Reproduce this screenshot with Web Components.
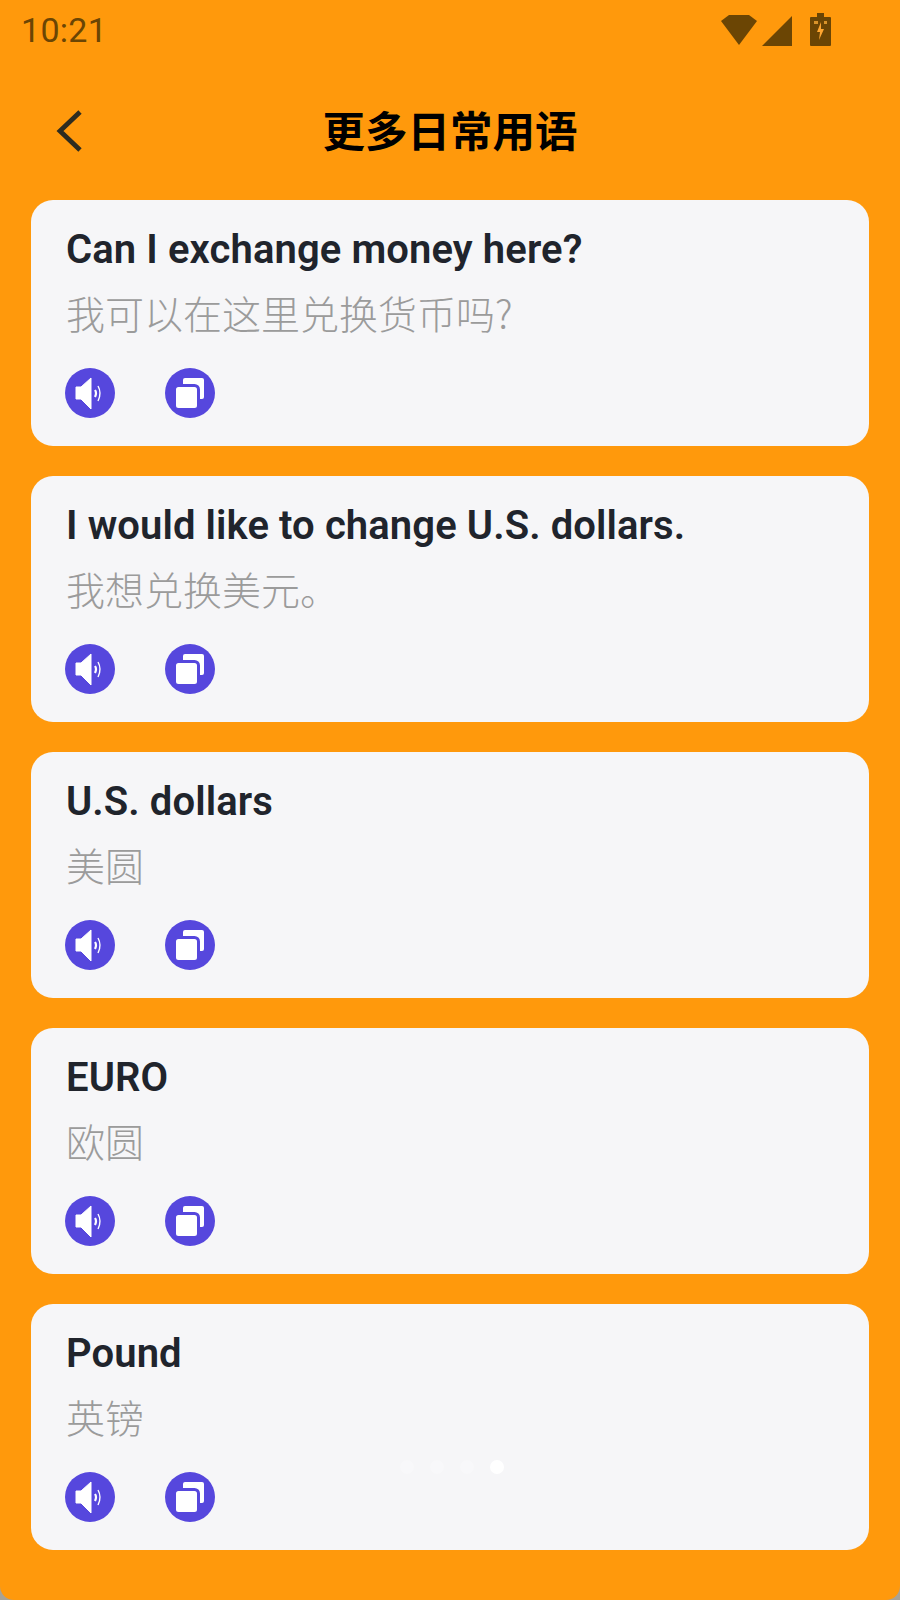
<!DOCTYPE html>
<html lang="zh">
<head>
<meta charset="utf-8">
<title>更多日常用语</title>
<style>
  html, body { margin: 0; padding: 0; background: #a9a295; }
  body { width: 900px; height: 1600px; overflow: hidden; font-family: Roboto, "Noto Sans CJK SC", sans-serif; }
</style>
</head>
<body>
<phrase-screen>
  <phrase-card en="Can I exchange money here?" zh="我可以在这里兑换货币吗?"></phrase-card>
  <phrase-card en="I would like to change U.S. dollars." zh="我想兑换美元。"></phrase-card>
  <phrase-card en="U.S. dollars" zh="美圆"></phrase-card>
  <phrase-card en="EURO" zh="欧圆"></phrase-card>
  <phrase-card en="Pound" zh="英镑"></phrase-card>
</phrase-screen>

<script>
class StatusBar extends HTMLElement {
  constructor() {
    super();
    this.attachShadow({ mode: "open" });
    this.shadowRoot.innerHTML = `
<style>
:host {
  display: flex;
  align-items: center;
  justify-content: space-between;
  height: 60px;
  padding: 0 69px 0 21px;
  color: #6b4504;
}
.time { font: 400 34px/1 Roboto, sans-serif; letter-spacing: 0.3px; }
.icons { display: flex; align-items: flex-start; height: 34px; }
svg { display: block; fill: #6b4504; }
</style>
<span class="time">10:21</span>
<span class="icons">
  <svg width="36" height="34" viewBox="0 0 36 34"><path d="M0 8 L8 2 H28 L36 8 L18 32 Z"/></svg>
  <svg width="31" height="34" viewBox="0 0 31 34" style="margin-left:5px"><path d="M0 33 L30 3 V33 Z"/></svg>
  <svg width="21" height="34" viewBox="0 0 21 34" style="margin-left:17px">
    <path d="M7 0 H14 V4 H20 Q21 4 21 5 V32 Q21 33 20 33 H1 Q0 33 0 32 V5 Q0 4 1 4 H7 Z"/>
    <path d="M11 9 L7 19 H10 L9 27 L14 16 H11 Z" fill="#ffa630"/>
    <path d="M4 8 H8 V11 H4 Z M14 8 H17 V11 H14 Z" fill="#d9932a"/>
  </svg>
</span>`;
  }
}

class TopBar extends HTMLElement {
  constructor() {
    super();
    this.attachShadow({ mode: "open" });
    this.shadowRoot.innerHTML = `
<style>
:host {
  display: block;
  position: relative;
  height: 80px;
  margin-top: 31px;
  text-align: center;
}
h1 {
  margin: 0;
  font: 700 42.5px/75px "Noto Sans CJK SC", sans-serif;
  color: #000;
}
button {
  position: absolute;
  left: 50px;
  top: 18px;
  padding: 0;
  border: 0;
  background: none;
}
svg { display: block; }
</style>
<button aria-label="back">
  <svg width="40" height="44" viewBox="0 0 40 44"><path d="M30 3 L10 22 L30 41" fill="none" stroke="#2e2c20" stroke-width="4.8"/></svg>
</button>
<h1>更多日常用语</h1>`;
  }
}

class RoundIcon extends HTMLElement {
  constructor() {
    super();
    this.attachShadow({ mode: "open" });
    const icons = {
      sound: `<path d="M11 19 H16 L26 10 V41 L16 31 H11 Z" fill="#fff" stroke="#fff" stroke-width="1" stroke-linejoin="round"/>
        <path d="M30 22 Q32 25 30 29" fill="none" stroke="#fff" stroke-width="2.2"/>
        <path d="M33 18 Q37 25 33 33" fill="none" stroke="#fff" stroke-width="1.4"/>`,
      copy: `<rect x="18" y="10" width="21" height="21" rx="2" fill="#fff"/>
        <rect x="9.5" y="17.5" width="24" height="24" rx="4" fill="#fff" stroke="#5647dd" stroke-width="3"/>`
    };
    this.shadowRoot.innerHTML = `
<style>
:host { display: block; width: 50px; height: 50px; }
svg { display: block; }
</style>
<svg width="50" height="50" viewBox="0 0 50 50">
  <circle cx="25" cy="25" r="25" fill="#5647dd"/>
  ${icons[this.getAttribute("name")] || ""}
</svg>`;
  }
}

class PhraseCard extends HTMLElement {
  constructor() {
    super();
    this.attachShadow({ mode: "open" });
    this.shadowRoot.innerHTML = `
<style>
:host {
  display: block;
  box-sizing: border-box;
  height: 245.5px;
  padding: 25px 35px 0;
  background: #f6f6f8;
  border-radius: 22px;
}
.en { font: 600 40px/50px Roboto, sans-serif; letter-spacing: 0.1px; color: #20242c; white-space: nowrap; }
.zh { margin-top: 11px; font: 300 39px/52px "Noto Sans CJK SC", sans-serif; color: #9b9b9b; white-space: nowrap; }
.actions { display: flex; gap: 50px; margin: 30px 0 0 -1px; }
</style>
<div class="en"></div>
<div class="zh"></div>
<div class="actions">
  <round-icon name="sound"></round-icon>
  <round-icon name="copy"></round-icon>
</div>`;
  }
  connectedCallback() {
    this.shadowRoot.querySelector(".en").textContent = this.getAttribute("en");
    this.shadowRoot.querySelector(".zh").textContent = this.getAttribute("zh");
  }
}

class PageDots extends HTMLElement {
  constructor() {
    super();
    this.attachShadow({ mode: "open" });
    this.shadowRoot.innerHTML = `
<style>
:host {
  position: absolute;
  left: 400px;
  top: 1460px;
  display: flex;
  gap: 16px;
}
i { display: block; width: 14px; height: 14px; border-radius: 50%; background: #fff; opacity: 0.25; }
i:last-child { opacity: 1; }
</style>
<i></i><i></i><i></i><i></i>`;
  }
}

class PhraseScreen extends HTMLElement {
  constructor() {
    super();
    this.attachShadow({ mode: "open" });
    this.shadowRoot.innerHTML = `
<style>
:host { display: block; position: relative; width: 900px; height: 1600px; background: #ff990c; border-radius: 0 0 14px 14px; }
.list { display: flex; flex-direction: column; gap: 30.5px; padding: 0 31px; margin-top: 29px; }
</style>
<status-bar></status-bar>
<top-bar></top-bar>
<div class="list"><slot></slot></div>
<page-dots></page-dots>`;
  }
}

customElements.define("status-bar", StatusBar);
customElements.define("top-bar", TopBar);
customElements.define("round-icon", RoundIcon);
customElements.define("phrase-card", PhraseCard);
customElements.define("page-dots", PageDots);
customElements.define("phrase-screen", PhraseScreen);
</script>
</body>
</html>
